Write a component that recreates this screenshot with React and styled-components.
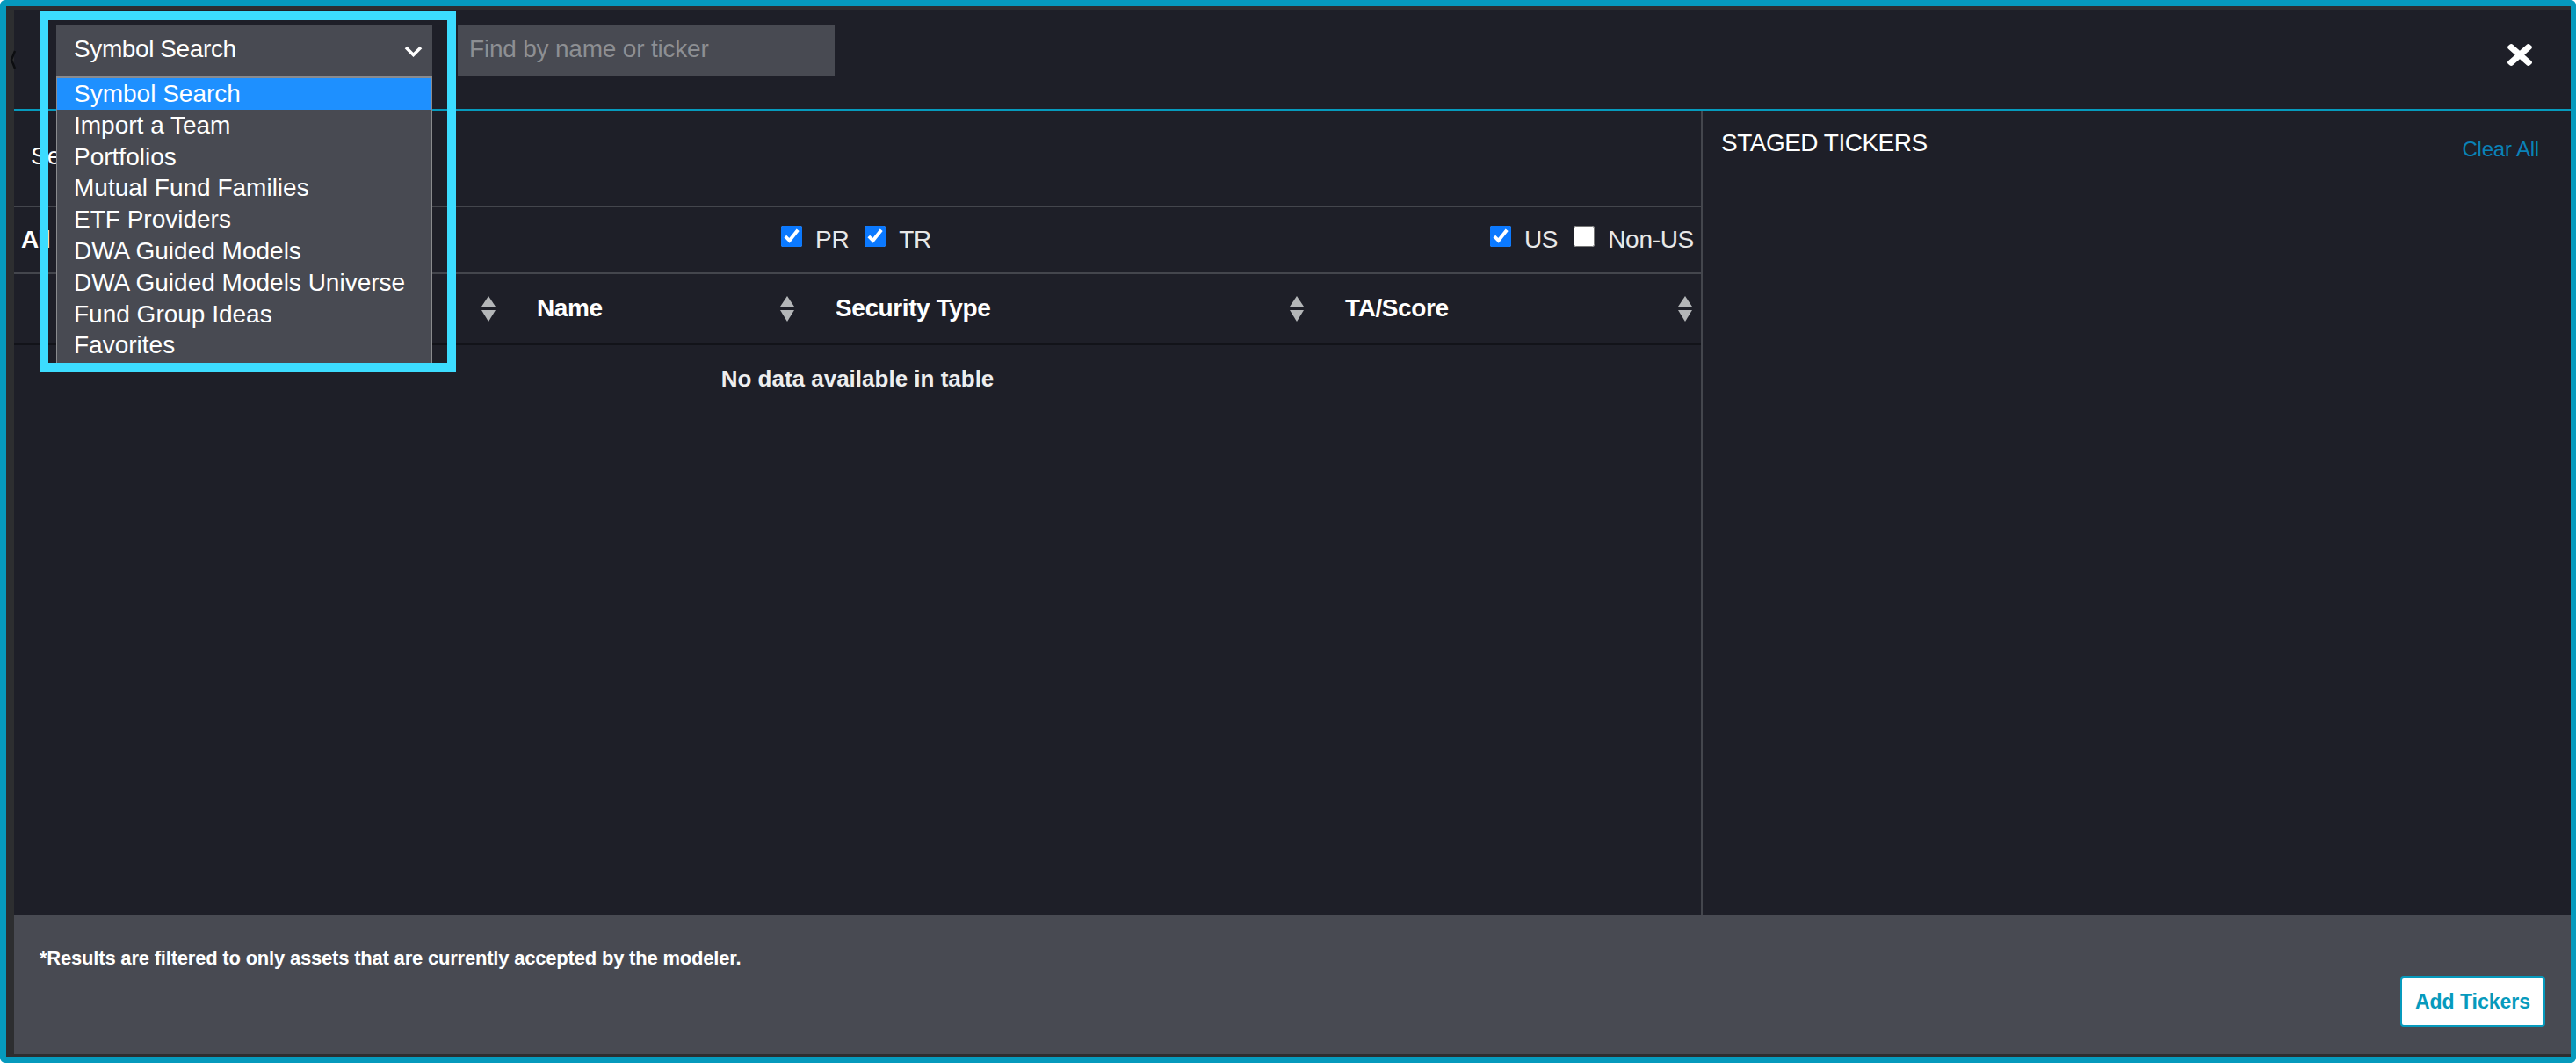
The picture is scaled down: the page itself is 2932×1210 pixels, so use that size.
import React from 'react';
import styled, { createGlobalStyle } from 'styled-components';

const GlobalStyle = createGlobalStyle`
  html, body {
    margin: 0;
    padding: 0;
    background: #fff;
  }
  * {
    box-sizing: border-box;
  }
`;

const OPTIONS = [
  'Symbol Search',
  'Import a Team',
  'Portfolios',
  'Mutual Fund Families',
  'ETF Providers',
  'DWA Guided Models',
  'DWA Guided Models Universe',
  'Fund Group Ideas',
  'Favorites',
];

const COLUMNS = [
  { label: '', width: 549 },
  { label: 'Name', width: 340 },
  { label: 'Security Type', width: 580 },
  { label: 'TA/Score', width: 442 },
];

function SortIcon() {
  return (
    <SortSvg viewBox="0 0 18 29">
      <path d="M9 0 L17 12 H1 Z" fill="#b4b6b8" />
      <path d="M1 16 H17 L9 29 Z" fill="#b4b6b8" />
    </SortSvg>
  );
}

function Check({ label, checked }) {
  return (
    <CheckLabel>
      <CheckBox type="checkbox" checked={checked} readOnly />
      {label}
    </CheckLabel>
  );
}

export default function App() {
  return (
    <Frame>
      <GlobalStyle />
      <Modal>
        <BackMark viewBox="0 0 8 22">
          <path d="M6 1 L2 11 L6 21" fill="none" stroke="#0c0d10" strokeWidth="2.4" />
        </BackMark>
        <Header>
          <SelectBox>
            Symbol Search
            <ChevronSvg viewBox="0 0 21 13">
              <path d="M2 2 L10.5 10.5 L19 2" fill="none" stroke="#fff" strokeWidth="3.6" />
            </ChevronSvg>
          </SelectBox>
          <SearchInput placeholder="Find by name or ticker" />
          <CloseIcon viewBox="0 80 352 352" preserveAspectRatio="none">
            <path
              fill="#fff"
              d="M242.72 256l100.07-100.07c12.28-12.28 12.28-32.19 0-44.48l-22.24-22.24c-12.28-12.28-32.19-12.28-44.48 0L176 189.28 75.93 89.21c-12.28-12.28-32.19-12.28-44.48 0L9.21 111.45c-12.28 12.28-12.28 32.19 0 44.48L109.28 256 9.21 356.07c-12.28 12.28-12.28 32.19 0 44.48l22.24 22.24c12.28 12.28 32.2 12.28 44.48 0L176 322.72l100.07 100.07c12.28 12.28 32.2 12.28 44.48 0l22.24-22.24c12.28-12.28 12.28-32.19 0-44.48L242.72 256z"
            />
          </CloseIcon>
        </Header>
        <Body>
          <LeftPane>
            <SearchRow>Selected</SearchRow>
            <FilterRow>
              <FilterLabel>All</FilterLabel>
              <CheckGroup>
                <Check label="PR" checked />
                <Check label="TR" checked />
              </CheckGroup>
              <CheckGroup>
                <Check label="US" checked />
                <Check label="Non-US" checked={false} />
              </CheckGroup>
            </FilterRow>
            <TableHead>
              {COLUMNS.map((col) => (
                <HeadCell key={col.label || 'symbol'} $width={col.width}>
                  {col.label}
                  <SortIcon />
                </HeadCell>
              ))}
            </TableHead>
            <EmptyRow>No data available in table</EmptyRow>
          </LeftPane>
          <RightPane>
            <StagedTitle>STAGED TICKERS</StagedTitle>
            <ClearLink>Clear All</ClearLink>
          </RightPane>
        </Body>
        <Footer>
          <FooterNote>*Results are filtered to only assets that are currently accepted by the modeler.</FooterNote>
          <AddButton>Add Tickers</AddButton>
        </Footer>
        <OptionList>
          {OPTIONS.map((opt, i) => (
            <OptionItem key={opt} $active={i === 0}>
              {opt}
            </OptionItem>
          ))}
        </OptionList>
      </Modal>
      <Highlight />
    </Frame>
  );
}

const Frame = styled.div`
  position: relative;
  width: 2932px;
  height: 1210px;
  border: solid #069abd;
  border-width: 7px 6px 7px 7px;
  border-radius: 6px;
  background: #2d2e30;
  overflow: hidden;
  font-family: 'Liberation Sans', Arial, sans-serif;
  color: #fff;
`;

const Modal = styled.div`
  position: relative;
  display: flex;
  flex-direction: column;
  height: 100%;
  margin-left: 9px;
  padding-top: 4px;
  padding-bottom: 3px;
`;

const BackMark = styled.svg`
  position: absolute;
  top: 50px;
  left: -5px;
  width: 8px;
  height: 22px;
`;

const Header = styled.div`
  display: flex;
  align-items: flex-start;
  height: 115px;
  padding: 18px 44px 0 48px;
  background: #1e1f28;
  border-bottom: 2px solid #069abd;
`;

const SelectBox = styled.div`
  display: flex;
  align-items: center;
  justify-content: space-between;
  width: 428px;
  height: 58px;
  padding: 0 11px 4px 20px;
  background: #484a52;
  font-size: 28px;
  letter-spacing: -0.4px;
`;

const ChevronSvg = styled.svg`
  width: 21px;
  height: 13px;
  margin-top: 4px;
`;

const SearchInput = styled.input`
  width: 429px;
  height: 58px;
  margin-left: 29px;
  padding: 0 13px 4px;
  background: #484a52;
  border: none;
  outline: none;
  color: #fff;
  font-family: inherit;
  font-size: 28px;
  letter-spacing: -0.2px;

  &::placeholder {
    color: #8d8f93;
    opacity: 1;
  }
`;

const CloseIcon = styled.svg`
  width: 28px;
  height: 25px;
  margin-left: auto;
  margin-top: 21px;
`;

const Body = styled.div`
  display: flex;
  flex: 1;
  min-height: 0;
  background: #1e1f28;
`;

const LeftPane = styled.div`
  width: 1922px;
  border-right: 2px solid #44464d;
`;

const SearchRow = styled.div`
  display: flex;
  align-items: center;
  height: 110px;
  padding: 0 0 4px 19px;
  border-bottom: 2px solid #44464d;
  font-size: 28px;
`;

const FilterRow = styled.div`
  display: grid;
  grid-template-columns: 865px 1fr auto;
  align-items: center;
  height: 76px;
  padding: 0 8px;
  border-bottom: 2px solid #44464d;
`;

const FilterLabel = styled.span`
  font-size: 28px;
  font-weight: 700;
  letter-spacing: -1px;
`;

const CheckGroup = styled.div`
  display: flex;
  align-items: center;
  gap: 18px;
`;

const CheckLabel = styled.label`
  display: flex;
  align-items: center;
  gap: 15px;
  font-size: 28px;
  letter-spacing: -0.3px;
  color: #e8e8e8;
`;

const CheckBox = styled.input`
  width: 24px;
  height: 24px;
  margin: -8px 0 0;
  accent-color: #0b79ff;
`;

const TableHead = styled.div`
  display: flex;
  align-items: center;
  height: 81px;
  border-bottom: 3px solid #121319;
`;

const HeadCell = styled.div`
  display: flex;
  align-items: center;
  width: ${(p) => p.$width}px;
  padding-left: 46px;
  font-size: 28px;
  font-weight: 700;
  letter-spacing: -0.4px;
`;

const SortSvg = styled.svg`
  flex: none;
  width: 18px;
  height: 29px;
  margin-left: auto;
`;

const EmptyRow = styled.div`
  padding-top: 22px;
  text-align: center;
  font-size: 26px;
  font-weight: 700;
  line-height: 32px;
  color: #eee;
`;

const RightPane = styled.div`
  display: flex;
  flex: 1;
  align-items: flex-start;
  justify-content: space-between;
  padding: 19px 36px 0 21px;
`;

const StagedTitle = styled.h2`
  margin: 0;
  font-size: 28px;
  font-weight: 400;
  line-height: 36px;
  letter-spacing: -0.5px;
`;

const ClearLink = styled.a`
  margin-top: 10px;
  font-size: 24px;
  line-height: 30px;
  letter-spacing: -0.2px;
  color: #0a82b8;
`;

const Footer = styled.div`
  display: flex;
  align-items: flex-end;
  justify-content: space-between;
  height: 158px;
  padding: 0 29px 31px 29px;
  background: #484a52;
`;

const FooterNote = styled.p`
  align-self: flex-start;
  margin: 34px 0 0;
  font-size: 22px;
  line-height: 30px;
  font-weight: 700;
  letter-spacing: -0.2px;
  color: #fff;
`;

const AddButton = styled.button`
  width: 165px;
  height: 58px;
  padding: 0;
  background: #fff;
  border: 2px solid #069abd;
  border-radius: 4px;
  color: #069abd;
  font-family: inherit;
  font-size: 23px;
  font-weight: 700;
`;

const OptionList = styled.ul`
  position: absolute;
  top: 80px;
  left: 48px;
  width: 428px;
  height: 327px;
  margin: 0;
  padding: 0;
  list-style: none;
  background: #484a52;
  border: 1px solid #8a8b8e;
  border-top-width: 2px;
  overflow: hidden;
`;

const OptionItem = styled.li`
  height: 35.8px;
  padding-left: 19px;
  font-size: 28px;
  line-height: 35px;
  color: #fff;
  background: ${(p) => (p.$active ? '#1e90ff' : 'transparent')};
`;

const Highlight = styled.div`
  position: absolute;
  top: 6px;
  left: 38px;
  width: 474px;
  height: 410px;
  border: 10px solid #3cdcff;
  pointer-events: none;
`;
